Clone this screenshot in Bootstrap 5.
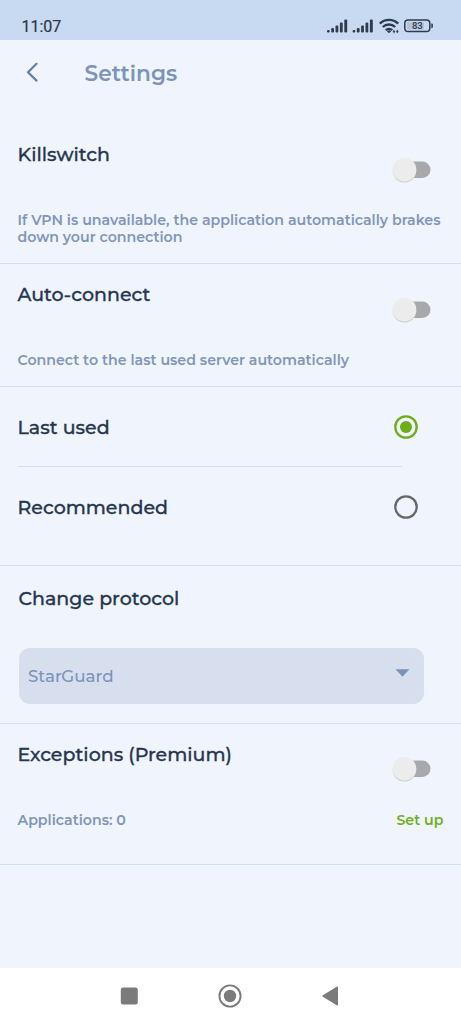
<!DOCTYPE html>
<html lang="en">
<head>
<meta charset="utf-8">
<meta name="viewport" content="width=device-width, initial-scale=1">
<title>Settings</title>
<link href="https://cdn.jsdelivr.net/npm/bootstrap@5.3.0/dist/css/bootstrap.min.css" rel="stylesheet">
<style>
  body { font-family: Montserrat, "Liberation Sans", sans-serif; background: #f0f4fc; color: #263650; }
  .screen { height: 1024px; overflow: hidden; }
  .status { height: 40px; background: #c8daf2; font-family: Roboto, sans-serif; color: #2b3646; padding: 13px 26px 0 21.5px; }
  .clock { font-size: 16px; line-height: 28px; font-weight: 400; -webkit-text-stroke: .2px; }
  .topbar { height: 81px; padding: 17px 0 0 22px; }
  .topbar h1 { font-size: 21.7px; line-height: 33px; font-weight: 600; color: #7c93bb; margin: 0 0 0 42.5px; }
  .section { border-bottom: 1px solid #d3dff0; padding: 18px 17.5px 0 17.5px; }
  .head-row { height: 70px; }
  .title { font-size: 19px; line-height: 26px; font-weight: 500; margin: 0; -webkit-text-stroke: .3px; }
  .desc { font-size: 14.2px; line-height: 17px; font-weight: 600; color: #7f95ba; margin: 0; white-space: nowrap; }
  .toggle { margin: 12.5px 12px 0 0; }
  .killswitch { height: 143px; padding-top: 21px; }
  .autoconnect { height: 123px; }
  .choices { height: 179px; padding-top: 0; }
  .choice { height: 79px; padding: 1px 25.5px 0 0; }
  .choice .title { padding-top: 2px; }
  .divider { height: 1px; width: 384.5px; background: #d3dff0; }
  .protocol { height: 158px; padding-top: 20px; padding-left: 18.5px; }
  .exceptions { height: 141px; }
  .exceptions .toggle { margin-top: 12px; }
  .picker { height: 56px; width: 405px; margin-top: 36px; border-radius: 11px; background: #d7dfee; color: #7c93bb; font-size: 16.7px; font-weight: 500; padding: 1px 14px 0 9.5px; }
  .caret { margin-bottom: 8px; }
  .setup { color: #6fb01c; }
  .navkeys { height: 56px; background: #fff; padding: 0 122px 0 120px; }
</style>
</head>
<body>
<svg class="d-none">
  <symbol id="switch" viewBox="0 0 42 30">
    <rect x="10" y="6.500" width="30.500" height="16.500" rx="8.250" fill="#a8a9ad"/>
    <circle cx="14.500" cy="15.800" r="11.800" fill="#cfd1d6"/>
    <circle cx="14.500" cy="14.700" r="11.800" fill="#ececec"/>
  </symbol>
</svg>
<div class="screen d-flex flex-column">
  <div class="status d-flex justify-content-between">
    <span class="clock">11:07</span>
    <svg width="110" height="24" viewBox="0 0 110 24" fill="#2f3b4d">
      <g id="signal"><rect x="2" y="17" width="2.700" height="2.500" rx="1"/><rect x="6.200" y="15" width="2.800" height="4.500" rx="1"/><rect x="10.500" y="12.500" width="2.800" height="7" rx="1"/><rect x="14.900" y="9.500" width="2.800" height="10" rx="1"/><rect x="19.300" y="6.500" width="2.900" height="13" rx="1"/></g>
      <use href="#signal" x="25.600"/>
      <g fill="none" stroke="#2f3b4d" stroke-width="2.400"><path d="M54.800 10.600a13.200 13.200 0 0 1 18.400 0"/><path d="M57.800 14a9 9 0 0 1 12.400 0"/><path d="M60.700 17.200a5 5 0 0 1 6.600 0"/></g>
      <path d="M61.800 18.300a3.200 3.200 0 0 1 4.400 0L64 20.300z"/>
      <path d="M69 16.800l1.500 2h-1v1.500h-1v-1.500h-1zM72.300 20.300l1.500-2h-1v-1.500h-1v1.500h-1z"/>
      <rect x="79.800" y="6.900" width="25" height="11.600" rx="3.300" fill="none" stroke="#2f3b4d" stroke-width="1.500"/>
      <rect x="82" y="9" width="17" height="7.500" rx="1" fill="#b3c3da"/>
      <path d="M106.300 10.500h.6q1 0 1 1v2.400q0 1-1 1h-.6z"/>
      <text x="92.300" y="16.100" text-anchor="middle" font-size="9.500" font-weight="500" font-family="Roboto">83</text>
    </svg>
  </div>
  <header class="topbar d-flex align-items-start">
    <svg width="20" height="30" viewBox="0 0 20 30" fill="none" stroke="#667da8" stroke-width="2.200" stroke-linecap="round" stroke-linejoin="round"><path d="M14.500 6.800 6 15.200l8.500 8.400"/></svg>
    <h1>Settings</h1>
  </header>
  <main class="flex-grow-1">
    <section class="section killswitch">
      <div class="head-row d-flex justify-content-between align-items-start">
        <h2 class="title">Killswitch</h2>
        <svg class="toggle" width="42" height="30"><use href="#switch"/></svg>
      </div>
      <p class="desc">If VPN is unavailable, the application automatically brakes<br>down your connection</p>
    </section>
    <section class="section autoconnect">
      <div class="head-row d-flex justify-content-between align-items-start">
        <h2 class="title">Auto-connect</h2>
        <svg class="toggle" width="42" height="30"><use href="#switch"/></svg>
      </div>
      <p class="desc">Connect to the last used server automatically</p>
    </section>
    <section class="section choices">
      <div class="choice d-flex justify-content-between align-items-center">
        <h2 class="title">Last used</h2>
        <svg width="24" height="24" viewBox="0 0 24 24"><circle cx="12" cy="12" r="10.700" fill="none" stroke="#6fad1b" stroke-width="2.300"/><circle cx="12" cy="12" r="6" fill="#6fad1b"/></svg>
      </div>
      <div class="divider"></div>
      <div class="choice d-flex justify-content-between align-items-center">
        <h2 class="title">Recommended</h2>
        <svg width="24" height="24" viewBox="0 0 24 24"><circle cx="12" cy="12" r="10.700" fill="none" stroke="#67686c" stroke-width="2.300"/></svg>
      </div>
    </section>
    <section class="section protocol">
      <h2 class="title">Change protocol</h2>
      <div class="picker d-flex justify-content-between align-items-center">
        <span>StarGuard</span>
        <svg class="caret" width="15" height="8" viewBox="0 0 15 8" fill="#7c93b9"><path d="M.500.300h14L7.500 7.700z"/></svg>
      </div>
    </section>
    <section class="section exceptions">
      <div class="head-row d-flex justify-content-between align-items-start">
        <h2 class="title">Exceptions (Premium)</h2>
        <svg class="toggle" width="42" height="30"><use href="#switch"/></svg>
      </div>
      <div class="d-flex justify-content-between">
        <p class="desc">Applications: 0</p>
        <p class="desc setup">Set up</p>
      </div>
    </section>
  </main>
  <nav class="navkeys d-flex justify-content-between align-items-center">
    <svg width="18" height="18" viewBox="0 0 18 18" fill="#7b7b7b"><rect x=".800" y=".500" width="17" height="17" rx="2.500"/></svg>
    <svg width="24" height="24" viewBox="0 0 24 24" fill="#7b7b7b"><circle cx="12" cy="12" r="10.600" fill="none" stroke="#7b7b7b" stroke-width="1.900"/><circle cx="12" cy="12" r="6.200"/></svg>
    <svg width="18" height="20" viewBox="0 0 18 20" fill="#7b7b7b"><path d="M15.800.800Q17 .200 17 1.500v17q0 1.300-1.200.700L1.800 10.800q-1-.800 0-1.600z"/></svg>
  </nav>
</div>
<script src="https://cdn.jsdelivr.net/npm/bootstrap@5.3.0/dist/js/bootstrap.bundle.min.js"></script>
</body>
</html>
